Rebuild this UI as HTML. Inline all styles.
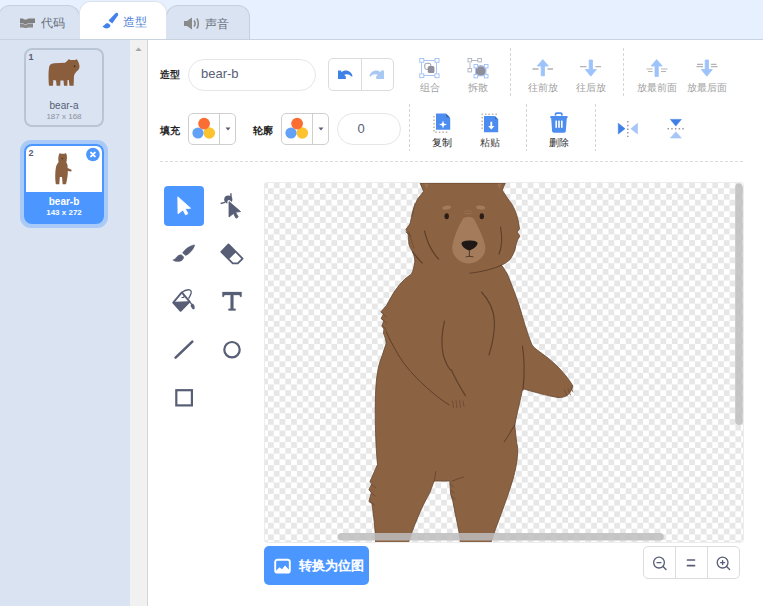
<!DOCTYPE html>
<html><head><meta charset="utf-8">
<style>
*{box-sizing:border-box;margin:0;padding:0}
html,body{width:763px;height:606px;overflow:hidden}
body{position:relative;background:#fff;font-family:"Liberation Sans",sans-serif;color:#575e75}
.a{position:absolute}
#topbar{left:0;top:0;width:763px;height:40px;background:#e6f0ff}
.tab{position:absolute;top:5px;height:35px;background:#d9e3f2;border:1px solid #c6cfdc;border-bottom:none;border-radius:12px 12px 0 0;font-size:13px;color:#686e80}
.tab.on{top:1px;background:#fff;height:39px;color:#4c97ff;border-color:#dde3ec}
#tabline{left:0;top:39px;width:763px;height:1px;background:#c9d2df}
#left{left:0;top:40px;width:130px;height:566px;background:#d9e3f2}
#sb{left:130px;top:40px;width:17px;height:566px;background:#f1f1f1}
#sbline{left:147px;top:40px;width:1px;height:566px;background:#d6d6d6}
.card{position:absolute;border-radius:8px}
.lbl{position:absolute;font-size:10px;color:#222;font-weight:bold}
.btnlbl{position:absolute;font-size:10px;color:#a2a2a2;text-align:center;white-space:nowrap}
.vdash{position:absolute;width:1px;background:repeating-linear-gradient(#d6d6d6 0 3px,transparent 3px 5px)}
</style></head><body>
<div id="topbar" class="a"></div>
<div class="tab" style="left:-2px;width:82px"></div>
<div class="tab" style="left:166px;width:84px"></div>
<div class="tab on" style="left:79px;width:88px"></div>
<div id="tabline" class="a"></div>
<!-- tab content -->
<svg class="a" style="left:19px;top:18px" width="17" height="10" viewBox="0 0 17 10"><path d="M1 0.5h3l1 1h3l1-1h7v4.5h-7l-1 1h-3l-1-1h-3z" fill="#7f7f7f"/><path d="M1 5.5h3l1 1h3l1-1h5v4h-5l-1 .5h-3l-1-.5h-3z" fill="#8a8a8a"/></svg>
<div class="a" style="left:41px;top:15px;font-size:12px;color:#6a6f7a">代码</div>
<svg class="a" style="left:100px;top:11px" width="20" height="19" viewBox="100 11 20 19"><path d="M116.8 12.8C118.1 13 118.5 14.4 117.9 15.6L112.2 23.4L108.5 20.5L115 13.7C115.6 13.1 116.2 12.7 116.8 12.8z" fill="#4282ea"/><path d="M108 23.2L110.4 25.1C110.5 27.4 108.4 28.7 106.2 28.4C104.2 28.1 102.9 27.1 102.5 25.8C103.3 25.9 104 25.6 104.5 24.9C105.3 23.6 106.6 22.9 108 23.2z" fill="#4282ea"/></svg>
<div class="a" style="left:123px;top:14px;font-size:12px;color:#4f7fd6">造型</div>
<svg class="a" style="left:183px;top:17px" width="17" height="13" viewBox="0 0 17 13"><path d="M1 4h3l5-3.5v12L4 9H1z" fill="#8a8a8a"/><path d="M11 3.5c1.2 1.6 1.2 4.4 0 6" stroke="#8a8a8a" stroke-width="1.6" fill="none"/><path d="M13.8 1.5c2 2.6 2 7.4 0 10" stroke="#8a8a8a" stroke-width="1.6" fill="none"/></svg>
<div class="a" style="left:205px;top:16px;font-size:12px;color:#6a6f7a">声音</div>
<div id="left" class="a"></div>
<div id="sb" class="a"></div>
<div id="sbline" class="a"></div>
<svg class="a" style="left:134px;top:46px" width="9" height="6" viewBox="0 0 9 6"><path d="M1.3 5L4.5 1.6L7.7 5z" fill="#a8a8a8"/></svg>

<!-- card 1 -->
<div class="card" style="left:24px;top:48px;width:80px;height:79px;border:2px solid #b9c4d4"></div>
<!-- card 2 -->
<div class="card" style="left:20px;top:140px;width:88px;height:88px;background:#a9c9f7;border-radius:11px"></div>
<div class="card" style="left:24px;top:144px;width:80px;height:80px;background:#4c97ff;overflow:hidden"><div class="a" style="left:2px;top:2px;width:76px;height:46px;background:#fff;border-radius:6px 6px 0 0"></div></div>
<div class="a" style="left:28.5px;top:52px;font-size:9px;font-weight:bold;color:#575e75">1</div>
<svg class="a" style="left:46px;top:57px" width="36" height="32" viewBox="46 57 36 32"><path d="M49 68C49 65 51 63.5 54 63.3L65 62.8C66.5 62 67.5 60.5 68.5 59.5C69 59 69.8 59.2 70 60L75.5 60C76 59 77 59 77.3 60C78.5 62 79.5 64.5 79.5 66.5C79.5 68.5 78.5 70 77 71C75.5 72.5 74.5 74 74 76L73.6 85.8L69.5 85.8L68.8 80L67.5 80L67.3 85.8L64 85.8L63.5 80.5L60.5 80.5L60.2 85.8L56.6 85.8L56 80.5L53.3 80L53 85.8L49 85.8C48.5 80 48.3 72 49 68z" fill="#8a5e3d"/><circle cx="74.6" cy="66.2" r="0.8" fill="#2a1a10"/></svg>
<div class="a" style="left:24px;top:100px;width:80px;text-align:center;font-size:10px;color:#575e75">bear-a</div>
<div class="a" style="left:24px;top:112px;width:80px;text-align:center;font-size:8px;color:#8d919c">187 x 168</div>
<div class="a" style="left:28.5px;top:148px;font-size:9px;font-weight:bold;color:#575e75">2</div>
<svg class="a" style="left:54px;top:152px" width="20" height="34" viewBox="54 152 20 34"><path d="M59 154.5L59.8 153L61 153.8L64.5 153.8L65.8 153L66.6 154.5C67.2 157 67 160 66.3 162.5C67.5 164 67.8 166 67.6 168L71 169.6C72 170.3 71.8 171.6 70.8 171.6L67.8 171C68 175 67 180 66 184.3L62.6 184.3L62 177L59.8 177L59.3 184.3L55.8 184.3C55 179 55 172 56 167C56.6 164.5 58 163 58.6 162C58 159.5 58.3 156.5 59 154.5z" fill="#8a6040"/><path d="M61.5 158.3l1.6 0 -0.8 1.2z" fill="#2a1a10"/></svg>
<div class="a" style="left:24px;top:196px;width:80px;text-align:center;font-size:10px;font-weight:bold;color:#fff">bear-b</div>
<div class="a" style="left:24px;top:208px;width:80px;text-align:center;font-size:8px;font-weight:bold;color:#fff">143 x 272</div>
<svg class="a" style="left:85px;top:147px" width="16" height="16" viewBox="85 147 16 16"><circle cx="92.9" cy="154.5" r="6.8" fill="#4c97ff"/><path d="M91 152.6l3.8 3.8M94.8 152.6l-3.8 3.8" stroke="#fff" stroke-width="2" stroke-linecap="round"/></svg>

<!-- toolbar -->
<div class="lbl" style="left:160px;top:68px">造型</div>
<div class="a" style="left:188px;top:59px;width:128px;height:32px;border:1px solid #e6e6e6;border-radius:16px"></div>
<div class="a" style="left:201px;top:66px;font-size:13px;color:#575e75">bear-b</div>
<div class="a" style="left:328px;top:58px;width:66px;height:33px;border:1px solid #dcdcdc;border-radius:5px"></div>
<div class="a" style="left:361px;top:58px;width:1px;height:33px;background:#dcdcdc"></div>

<svg class="a" style="left:337px;top:69px" width="17" height="11" viewBox="0 0 17 11"><path d="M1 1.6h3.2v1.6C6 1.8 8.5 1.2 10.6 1.7c2.6.6 4.4 2.6 5 5.6l-1.4.3c-1.2-1.6-2.8-2.4-4.8-2.3-.9 0-1.6.3-2.2.6l1.6 1.3v2.7H1z" fill="#3f82e6"/></svg>
<svg class="a" style="left:368px;top:69px" width="17" height="11" viewBox="0 0 17 11"><g transform="translate(17 0) scale(-1 1)"><path d="M1 1.6h3.2v1.6C6 1.8 8.5 1.2 10.6 1.7c2.6.6 4.4 2.6 5 5.6l-1.4.3c-1.2-1.6-2.8-2.4-4.8-2.3-.9 0-1.6.3-2.2.6l1.6 1.3v2.7H1z" fill="#a9c8f3"/></g></svg>
<div class="lbl" style="left:160px;top:124px">填充</div>
<div class="a" style="left:188px;top:113px;width:48px;height:32px;border:1px solid #cfcfcf;border-radius:5px"></div>
<div class="lbl" style="left:253px;top:124px">轮廓</div>
<div class="a" style="left:281px;top:113px;width:48px;height:32px;border:1px solid #cfcfcf;border-radius:5px"></div>
<div class="a" style="left:219px;top:113px;width:1px;height:32px;background:#cfcfcf"></div>
<div class="a" style="left:312px;top:113px;width:1px;height:32px;background:#cfcfcf"></div>
<svg class="a" style="left:190px;top:115px" width="28" height="26" viewBox="190 115 28 26"><circle cx="209.3" cy="133" r="5.8" fill="#fdc22f"/><circle cx="198" cy="133" r="5.6" fill="#63a1f6"/><circle cx="204.1" cy="123.6" r="5.9" fill="#fb6e33"/></svg>
<svg class="a" style="left:283px;top:115px" width="28" height="26" viewBox="190 115 28 26"><circle cx="209.3" cy="133" r="5.8" fill="#fdc22f"/><circle cx="198" cy="133" r="5.6" fill="#63a1f6"/><circle cx="204.1" cy="123.6" r="5.9" fill="#fb6e33"/></svg>
<svg class="a" style="left:225px;top:127px" width="6" height="4" viewBox="0 0 6 4"><path d="M0.5 0.5h5L3 3.5z" fill="#575e75"/></svg>
<svg class="a" style="left:318px;top:127px" width="6" height="4" viewBox="0 0 6 4"><path d="M0.5 0.5h5L3 3.5z" fill="#575e75"/></svg>
<div class="a" style="left:337px;top:113px;width:64px;height:32px;border:1px solid #e6e6e6;border-radius:16px"></div>
<div class="a" style="left:337px;top:121px;width:48px;text-align:center;font-size:13px;color:#575e75">0</div>

<svg class="a" style="left:419px;top:58px" width="22" height="21" viewBox="0 0 22 21"><g stroke="#a7c4f4" stroke-width="1" fill="#fff"><path d="M5 2.5H16M5 17.5H16M2.5 5V15M17.5 5V15" fill="none"/><rect x="0.8" y="0.5" width="4" height="3.8"/><rect x="16" y="0.5" width="4" height="3.8"/><rect x="0.8" y="15.8" width="4" height="3.8"/><rect x="16" y="15.8" width="4" height="3.8"/></g><rect x="5.8" y="5.3" width="6" height="6" rx="1.6" fill="none" stroke="#9a9aa6" stroke-width="1"/><rect x="8.8" y="8" width="6.6" height="7" rx="1.6" fill="#8f8f9c"/></svg>
<div class="btnlbl" style="left:410px;top:81px;width:40px">组合</div>
<svg class="a" style="left:467px;top:58px" width="23" height="21" viewBox="0 0 23 21"><g stroke="#b4b8c4" stroke-width="1" fill="#fff"><path d="M3 2.5H11M3 12V5" fill="none"/><rect x="1" y="0.5" width="3.6" height="3.4"/><rect x="10.8" y="0.5" width="3.6" height="3.4"/><rect x="1" y="10.5" width="3.6" height="3.4"/></g><circle cx="13.6" cy="12.7" r="5.4" fill="#8f8f9c"/><g stroke="#a7c4f4" stroke-width="1" fill="#fff"><path d="M9 8.2H18.5M9 17.8H18.5M8.5 9V17M19 9V17" fill="none"/><rect x="7" y="6.5" width="3.6" height="3.4"/><rect x="17.4" y="6.5" width="3.6" height="3.4"/><rect x="7" y="16.5" width="3.6" height="3.4"/><rect x="17.4" y="16.5" width="3.6" height="3.4"/></g></svg>
<div class="btnlbl" style="left:458px;top:81px;width:40px">拆散</div>
<svg class="a" style="left:530px;top:58px" width="26" height="20" viewBox="0 0 26 20"><path d="M2.5 11H8.5M17.5 11H23" stroke="#b3b3b3" stroke-width="1.3"/><path d="M12.8 1.6L18.4 8H14.5V17.8H11.2V8H7.3z" fill="#9dc3fa" stroke="#9dc3fa" stroke-width="0.8" stroke-linejoin="round"/></svg>
<div class="btnlbl" style="left:518px;top:81px;width:50px">往前放</div>
<svg class="a" style="left:578px;top:58px" width="26" height="20" viewBox="0 0 26 20"><path d="M2 8.7H8.5M17.5 8.7H23" stroke="#b3b3b3" stroke-width="1.3"/><path d="M12.8 18.2L18.4 11.5H14.5V2H11.2V11.5H7.3z" fill="#9dc3fa" stroke="#9dc3fa" stroke-width="0.8" stroke-linejoin="round"/></svg>
<div class="btnlbl" style="left:566px;top:81px;width:50px">往后放</div>
<svg class="a" style="left:644px;top:58px" width="26" height="20" viewBox="0 0 26 20"><path d="M2.5 11H8.5M4 13.5H8.5M17 11H23.5M17 13.5H22" stroke="#b3b3b3" stroke-width="1.2"/><path d="M12.6 1.6L18.2 8H14.3V18.5H11V8H7.1z" fill="#9dc3fa" stroke="#9dc3fa" stroke-width="0.8" stroke-linejoin="round"/></svg>
<div class="btnlbl" style="left:627px;top:81px;width:60px">放最前面</div>
<svg class="a" style="left:694px;top:58px" width="26" height="20" viewBox="0 0 26 20"><path d="M3 6.3H9M2.5 8.7H9M17 6.3H22.5M17 8.7H23.5" stroke="#b3b3b3" stroke-width="1.2"/><path d="M12.8 18.2L18.4 11.5H14.5V2H11.2V11.5H7.3z" fill="#9dc3fa" stroke="#9dc3fa" stroke-width="0.8" stroke-linejoin="round"/></svg>
<div class="btnlbl" style="left:677px;top:81px;width:60px">放最后面</div>
<svg class="a" style="left:432px;top:112px" width="20" height="22" viewBox="0 0 20 22"><path d="M2 4V20.2H17" stroke="#bdb3ab" stroke-width="1.5" stroke-dasharray="1.5 2" fill="none"/><path d="M4 1.6H13.9L18.2 5.9V17.7H4z" fill="#4d8df0"/><path d="M14.2 1.8L18 5.6H15.2c-.6 0-1-.4-1-1z" fill="#3a68b8"/><path d="M11 8.5l1 3 3 1-3 1-1 3-1-3-3-1 3-1z" fill="#fff"/></svg>
<div class="btnlbl" style="left:422px;top:136px;width:40px;color:#222">复制</div>
<svg class="a" style="left:480px;top:112px" width="20" height="22" viewBox="0 0 20 22"><path d="M2.2 17V2.2H17" stroke="#bdb3ab" stroke-width="1.5" stroke-dasharray="1.5 2" fill="none"/><path d="M4 4H14.7L18.2 7.5V20.3H4z" fill="#4d8df0"/><path d="M15 4.2L18 7.2H15.8c-.5 0-.8-.3-.8-.8z" fill="#3a68b8"/><path d="M10.4 9.8h1.8v4.2h2.3l-3.2 3.5-3.2-3.5h2.3z" fill="#fff"/></svg>
<div class="btnlbl" style="left:470px;top:136px;width:40px;color:#444">粘贴</div>
<svg class="a" style="left:549px;top:112px" width="20" height="22" viewBox="0 0 20 22"><path d="M6.5 3.5V2.6c0-.8.5-1.4 1.3-1.4h3.8c.8 0 1.3.6 1.3 1.4v.9" stroke="#4d8df0" stroke-width="1.8" fill="none"/><rect x="1.2" y="4" width="17.5" height="2.2" rx="1" fill="#4d8df0"/><path d="M2.2 6H17.8L16.8 19c-.1 1-.8 1.7-1.8 1.7H4.9c-1 0-1.7-.7-1.8-1.7z" fill="#4d8df0"/><rect x="6.4" y="8.6" width="1.6" height="7.2" fill="#fff"/><rect x="9.2" y="8.6" width="1.6" height="7.2" fill="#fff"/><rect x="12" y="8.6" width="1.6" height="7.2" fill="#fff"/></svg>
<div class="btnlbl" style="left:539px;top:136px;width:40px;color:#333">删除</div>
<svg class="a" style="left:616px;top:119px" width="24" height="20" viewBox="0 0 24 20"><path d="M2.3 4.3L9 9.7L2.3 15z" fill="#3f7fe6" stroke="#3f7fe6" stroke-width="0.6" stroke-linejoin="round"/><path d="M21.5 4.3L14.8 9.7L21.5 15z" fill="#a7c6f6" stroke="#a7c6f6" stroke-width="0.6" stroke-linejoin="round"/><path d="M11.8 2V18" stroke="#9b9b9b" stroke-width="1.5" stroke-dasharray="1.5 2.2"/></svg>
<svg class="a" style="left:666px;top:117px" width="20" height="23" viewBox="0 0 20 23"><path d="M4.4 2.4H15.3L9.8 9.1z" fill="#3f7fe6" stroke="#3f7fe6" stroke-width="0.6" stroke-linejoin="round"/><path d="M4.4 21H15.3L9.8 14.8z" fill="#a7c6f6" stroke="#a7c6f6" stroke-width="0.6" stroke-linejoin="round"/><path d="M1.5 11.8H18.5" stroke="#9b9b9b" stroke-width="1.5" stroke-dasharray="1.5 2.2"/></svg>
<div class="vdash" style="left:510px;top:48px;height:48px"></div>
<div class="vdash" style="left:623px;top:48px;height:48px"></div>
<div class="vdash" style="left:409px;top:104px;height:47px"></div>
<div class="vdash" style="left:526px;top:104px;height:47px"></div>
<div class="vdash" style="left:595px;top:104px;height:47px"></div>
<div class="a" style="left:160px;top:161px;width:584px;height:1px;background:repeating-linear-gradient(90deg,#dadada 0 3px,transparent 3px 5px)"></div>

<!-- tools -->
<div class="a" style="left:164px;top:186px;width:40px;height:40px;background:#4c97ff;border-radius:4px"></div>
<svg class="a" style="left:160px;top:182px" width="100" height="240" viewBox="160 182 100 240">
<path d="M177.8 196.8L190.6 208.2L185.2 208.8L187.9 213.6L185.6 214.9L183 210L178 213.8z" fill="#fff" stroke="#fff" stroke-width="0.8" stroke-linejoin="round"/>
<g fill="#575e75" stroke="#575e75" stroke-linejoin="round">
<circle cx="228.3" cy="199.6" r="4.1" stroke="none"/>
<path d="M220.6 203.5L225 202.4M230.9 193.2L231 197" stroke-width="1.4" fill="none"/>
<path d="M229 201.6L240.6 211.6L235.6 212.2L238.2 217L236 218.2L233.5 213.5L229 217z" stroke="#fff" stroke-width="3.2"/>
<path d="M229 201.6L240.6 211.6L235.6 212.2L238.2 217L236 218.2L233.5 213.5L229 217z" stroke-width="0.8"/>
<path d="M193.6 244.9c.8-.4 1.1.3.9 1-1.2 3.7-5 8-8.9 9.7l-3.1-2.6c2-4 7.6-7.3 11.1-8.1z" stroke-width="0.4"/>
<path d="M181.4 254.8l2.4 2.1c-.3 2.8-2.8 4.8-6 4.7-1.6 0-3.8-.6-5-1.7 1.3-.4 2.2-.8 2.9-1.7 1.3-2 3.5-3.8 5.7-3.4z" stroke-width="0.4"/>
<path d="M228.5 244.4L242.6 258.6L237.8 263.4L232.8 263.4L221.3 251.9z" fill="none" stroke-width="1.8"/>
<path d="M228.5 244.4L236 251.9L228.8 259.1L221.3 251.9z" stroke-width="0.5"/>
<path d="M181.8 292.4L189.6 301.6L180.6 310.8L173.2 302.6z" fill="none" stroke-width="1.9"/>
<path d="M173.8 302.4L189.2 301.8L180.6 310.4z" stroke-width="1.2"/>
<path d="M181.8 292.4C184 290.5 187 289.5 189.5 289.8C191.5 290.2 191.6 292.5 190.6 294.6L188.6 298.6" fill="none" stroke-width="1.3"/>
<path d="M181.5 297.5L183.8 297.3L184.4 294.8" fill="none" stroke-width="1.2"/>
<path d="M189.6 301.6L191.8 304.4" stroke-width="1.3" fill="none"/>
<path d="M192 303.8c1.3.1 2.2 1 2.4 2.3l.2 2.2c-.1 1-1.5 1.3-2.3.5l-1.3-2.4c-.5-1 0-2.6 1-2.6z" stroke-width="0.2"/>
<path d="M222.4 292.1H241.6V296.3C241.6 297.3 240.2 297.3 240 296.3L239.6 295H233.4V308.7H235.3C235.9 309 235.9 310.3 235.3 310.5H228.8C228.2 310.3 228.2 309 228.8 308.7H230.6V295H224.4L224 296.3C223.8 297.3 222.4 297.3 222.4 296.3z" stroke-width="0.3"/>
<path d="M175.6 357.6L192.3 341.6" stroke-width="2.6" stroke-linecap="round" fill="none"/>
<circle cx="232" cy="349.7" r="7.7" fill="none" stroke-width="2.2"/>
<rect x="176.3" y="390.2" width="15.6" height="15.2" fill="none" stroke-width="2.2" stroke-linejoin="miter"/>
</g>
</svg>
<!-- canvas -->
<svg class="a" style="left:264px;top:182px" width="480" height="361" viewBox="264 182 480 361">
<defs>
<pattern id="chk" patternUnits="userSpaceOnUse" x="262.23" y="182.45" width="11.54" height="11.54"><rect x="0" y="0" width="5.77" height="5.77" fill="#e7e7e7"/><rect x="5.77" y="5.77" width="5.77" height="5.77" fill="#e7e7e7"/></pattern>
<clipPath id="cc"><rect x="264" y="182" width="480" height="360" rx="3"/></clipPath>
</defs>
<g clip-path="url(#cc)">
<rect x="264" y="182" width="480" height="360" fill="#fff"/>
<rect x="264" y="182" width="480" height="360" fill="url(#chk)"/>
<!-- bear -->
<g id="bear">
<path fill="#8b6242" stroke="#654530" stroke-width="0.8" d="M420 183L423.6 191.4L417.5 199C415.5 204 413 209 411.9 214.7C411 219 410.5 222 409.9 224L405.9 229.5L408.2 234.5C408.5 238 408.6 241 408.9 244.3C409.8 247 411 249.5 412.6 251.8C414 255 414.8 258 414.8 262C414 267 413 271 411.4 274.3C405 278 400 284 397.3 287.6C393 293 389 301 386.5 305.5L380.8 311.9L383.5 314L381 318.5L383.8 321L381.8 326L384 329L383.4 333C385 337 386 340 386.1 343.6C384.8 348 383.5 351 382.2 355.4C380.5 360 379 364 378.2 368.6C377.2 374 376.6 378 376.3 382C374.5 400 375 440 377.5 464.5L369.9 481.7L371.9 483.7L368.9 489.7L371.4 492.6L368.9 501.5L371.9 503.5C373.5 515 375.5 530 375.6 544L408 544C413 528 421 508 430 492.2C432 487 433 484 434.1 481.1L449.8 481.1C450 485 450.3 490 450.6 493.9C451.5 497 452.5 500 453 502.1C455 515 459.5 530 460.6 544L490.5 544C496 526 506 503 513 479C518 462 518.5 448 516.8 443.4C516 437 515.3 430 514.8 424.9C517 413 520.5 400 522.7 388.6C530 391 548 396 558 397.5C566 398 571 394 572.8 386C568 377 558 366 548 358C540 352 534 348 532 345C527 333 523 318 519 305C515 293 511 283 507.2 273.8C505 270 503 267 501.5 265.2C505 263.5 508 261.5 510.1 259.4C513 255 515.5 250 515.9 245L517.5 240L520 236L517 232L519.5 229C518 215 514 206 508 199L502.2 190.2L505.3 183z"/>
<path d="M424 183.5L429 184L426.5 189z M501.5 183.5L497 184L499.5 189z" fill="#9c7352" opacity="0.8"/>
<g fill="#a47c5c">
<ellipse cx="446.6" cy="207.6" rx="4.4" ry="1.9" transform="rotate(-8 446.6 207.6)"/>
<ellipse cx="480.7" cy="207.6" rx="4.6" ry="2" transform="rotate(8 480.7 207.6)"/>
<path d="M463.2 218.5C466 216.6 470.8 216.6 473.6 218.5C478 226 483.5 237 485.3 246.5C486 256 478 263 468.6 263.6C459 263 452 256 452.2 247C454 236 458.5 226 463.2 218.5z"/>
</g>
<g fill="#2a1d16">
<ellipse cx="446.7" cy="216.2" rx="2.2" ry="3"/>
<ellipse cx="481.8" cy="216.2" rx="2.2" ry="3"/>
<path fill="#1e1816" d="M461.6 243C462 239.8 476.8 239.6 477.6 243C477.6 246 473 249.4 469.2 250.6C465.4 249.4 461.2 246 461.6 243z"/>
</g>
<g fill="none" stroke="#5e3f29" stroke-linecap="round">
<path d="M469.4 250.5V256.3M466.2 256.8C468 256.6 469 256.4 469.4 256.3C470 256.4 471.2 256.6 473 256.8" stroke="#3a281c" stroke-width="0.8"/>
<path d="M464.5 211.2C467 210.6 469 210.6 471.5 211.2M465 213.6C467 213.2 469 213.2 471 213.6" stroke="#9a7556" stroke-width="0.8"/>
<path d="M424.5 231C427 242 432 252 438.6 259.2" stroke-width="1.15"/><path d="M412.6 251.8C416 256 419 260 422.3 263" stroke-width="1.15"/><path d="M409 232C410.5 238 412 243 414 248M415 203C414 208 413 212 412.5 216" stroke-width="0.7" stroke="#6a4a33"/>
<path d="M500.5 227C502.5 238 502 247 499 254" stroke-width="1.15"/>
<path d="M501.5 265.2C494 268.5 484 271.5 470 273.2" stroke-width="1"/>
<path d="M386.1 331.7C393 346 399 357 406 366C418 381 434 395 449 405" stroke-width="1"/>
<path d="M451.4 370C455 378 460 387 465.4 395.6" stroke-width="1.15"/>
<path d="M444.5 321C441.5 333 441 345 443.5 356C447 366 450 370 451.4 370" stroke-width="1.15"/>
<path d="M452.5 401L453.5 407.5M456 400.5L457 407.8M459.5 400.5L460.5 407.5M463 401L464 406.5" stroke-width="0.8" stroke="#6a4830"/>
<path d="M481.5 292C489 300 494 310 494.5 322C494.5 336 491.5 347 489 355" stroke-width="1.15"/>
<path d="M522.5 346C524.5 360 524.5 376 523 390" stroke-width="1.15"/>
<path d="M564.5 390L567 396M568 389L570.5 395M571 387.5L573 392" stroke-width="0.8" stroke="#6a4830"/>
<path d="M514.8 424.9C511 431 507.5 437 504.2 442" stroke-width="1"/>
<path d="M435.7 471.6C435.5 475 434.8 478 434.1 481.1M452.2 481.1C456 479.5 460 478 463.8 477" stroke-width="1" stroke="#6a482f"/><path d="M450 484L453.5 487M450.5 490L454 493M451.5 496L455 499" stroke-width="0.8" stroke="#6a482f"/><path d="M382.5 313L386 317M382.5 319.5L386.5 323M383 326L386.5 330M371 484L376 488M370.5 492L375 496M370.5 502L374.5 505M406 232L411 236" stroke-width="0.8" stroke="#6a482f"/>
</g>
</g>
<!-- scrollbars -->
<rect x="337.8" y="533.1" width="326" height="7.4" rx="3.7" fill="#bdbdbd" fill-opacity="0.85"/>
<rect x="735.2" y="183.5" width="7.6" height="241.6" rx="3.8" fill="#bdbdbd" fill-opacity="0.85"/>
</g>
<rect x="264.5" y="182.5" width="479" height="360" rx="3" fill="none" stroke="#ececec" stroke-width="1"/>
</svg>
<!-- convert button -->
<div class="a" style="left:264px;top:546px;width:105px;height:39px;background:#4c97ff;border-radius:5px"></div>
<svg class="a" style="left:273px;top:558px" width="19" height="17" viewBox="0 0 19 17"><rect x="2.2" y="1.8" width="14.6" height="12.8" rx="2.2" fill="none" stroke="#fff" stroke-width="1.9"/><path d="M2.5 13.2L6.5 9.2L9 11.2L12 7.6L16.5 12.2V14.5H2.5z" fill="#fff"/></svg>
<div class="a" style="left:299px;top:558px;font-size:12.8px;color:#fff;-webkit-text-stroke:0.6px #fff;white-space:nowrap">转换为位图</div>
<!-- zoom -->
<div class="a" style="left:642.5px;top:546px;width:97px;height:33px;border:1px solid #dcdcdc;border-radius:5px"></div>
<div class="a" style="left:675px;top:546px;width:1px;height:33px;background:#dcdcdc"></div>
<div class="a" style="left:707px;top:546px;width:1px;height:33px;background:#dcdcdc"></div>
<svg class="a" style="left:650px;top:554px" width="85" height="20" viewBox="650 554 85 20"><g stroke="#575e75" fill="none" stroke-linecap="round"><circle cx="659" cy="562.6" r="5.4" stroke-width="1.3"/><path d="M663 566.6L666 569.6" stroke-width="1.4"/><path d="M657 562.6H661" stroke-width="1.4"/><path d="M687.5 560H694.5M687.5 565.7H694.5" stroke-width="1.7"/><circle cx="722.6" cy="562.6" r="5.4" stroke-width="1.3"/><path d="M726.6 566.6L729.6 569.6" stroke-width="1.4"/><path d="M720.6 562.6H724.6M722.6 560.6V564.6" stroke-width="1.4"/></g></svg>
</body></html>
